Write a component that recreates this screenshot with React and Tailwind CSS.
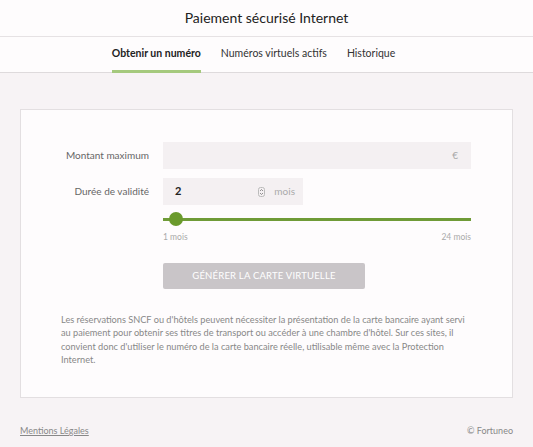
const tabs = ['Obtenir un numéro', 'Numéros virtuels actifs', 'Historique'];

const App = () => {
  return (
    <div className="min-h-[447px] flex flex-col bg-[#f7f3f5] text-[#333] font-['Lato',sans-serif]">
      <div className="bg-[#fefcfd]">
        <div className="h-[37px] flex items-center justify-center border-b border-[#e6e2e4]">
          <h1 className="text-[14px] text-[#222] leading-none">Paiement sécurisé Internet</h1>
        </div>
        <div className="h-[36px] flex justify-center gap-[20px] border-b border-[#dedadc] pr-[26px]">
          {tabs.map((t, i) => (
            <div
              key={t}
              className={`flex items-center text-[10.5px] border-b-[3px] -mb-px ${
                i === 0 ? 'font-bold text-[#222] border-[#a5c97d]' : 'text-[#333] border-transparent'
              }`}
            >
              {t}
            </div>
          ))}
        </div>
      </div>

      <div className="px-[20px] pt-[36px]">
        <div className="bg-[#fefcfd] border border-[#e3dfe1] pt-[32px] pb-[30px]">
          <div className="flex items-center">
            <div className="w-[128px] text-right text-[10px] text-[#666]">Montant maximum</div>
            <div className="ml-[14px] w-[308px] h-[27px] bg-[#f4f0f2] flex items-center justify-end pr-[13px] text-[10px] text-[#aaa]">
              €
            </div>
          </div>
          <div className="flex items-center mt-[9px]">
            <div className="w-[128px] text-right text-[10px] text-[#666]">Durée de validité</div>
            <div className="ml-[14px] w-[140px] h-[27px] bg-[#f4f0f2] flex items-center pl-[12px] pr-[8px] text-[10px]">
              <span className="font-bold text-[#222] text-[11px]">2</span>
              <svg className="ml-auto" width="7" height="10" viewBox="0 0 7 10">
                <rect x="0.5" y="0.5" width="6" height="9" rx="2" fill="none" stroke="#bbb" />
                <path d="M2 4 L3.5 2.5 L5 4 M2 6 L3.5 7.5 L5 6" fill="none" stroke="#777" strokeWidth="0.8" />
              </svg>
              <span className="ml-[9px] text-[#aaa]">mois</span>
            </div>
          </div>

          <div className="ml-[142px] w-[308px] mt-[6px]">
            <div className="relative h-[16px] flex items-center">
              <div className="w-full h-[3px] bg-[#6f9b37]" />
              <div className="absolute left-[6px] top-[1px] w-[14px] h-[14px] rounded-full bg-[#6a9a2c]" />
            </div>
            <div className="flex justify-between text-[8.5px] text-[#aaa] mt-[4px]">
              <span>1 mois</span>
              <span>24 mois</span>
            </div>
            <button className="mt-[19px] w-[202px] h-[26px] rounded-[2px] bg-[#c9c5c8] text-white text-[9.5px] tracking-[0.2px] uppercase">
              Générer la carte virtuelle
            </button>
          </div>

          <p className="mt-[24px] ml-[40px] w-[404px] text-[9.2px] leading-[13.5px] text-[#888]">
            Les réservations SNCF ou d'hôtels peuvent nécessiter la présentation de la carte bancaire ayant servi au
            paiement pour obtenir ses titres de transport ou accéder à une chambre d'hôtel. Sur ces sites, il convient
            donc d'utiliser le numéro de la carte bancaire réelle, utilisable même avec la Protection Internet.
          </p>
        </div>

        <div className="flex justify-between mt-[26px] text-[9px] text-[#888]">
          <a className="underline">Mentions Légales</a>
          <span>© Fortuneo</span>
        </div>
      </div>
    </div>
  );
};

export default App;
